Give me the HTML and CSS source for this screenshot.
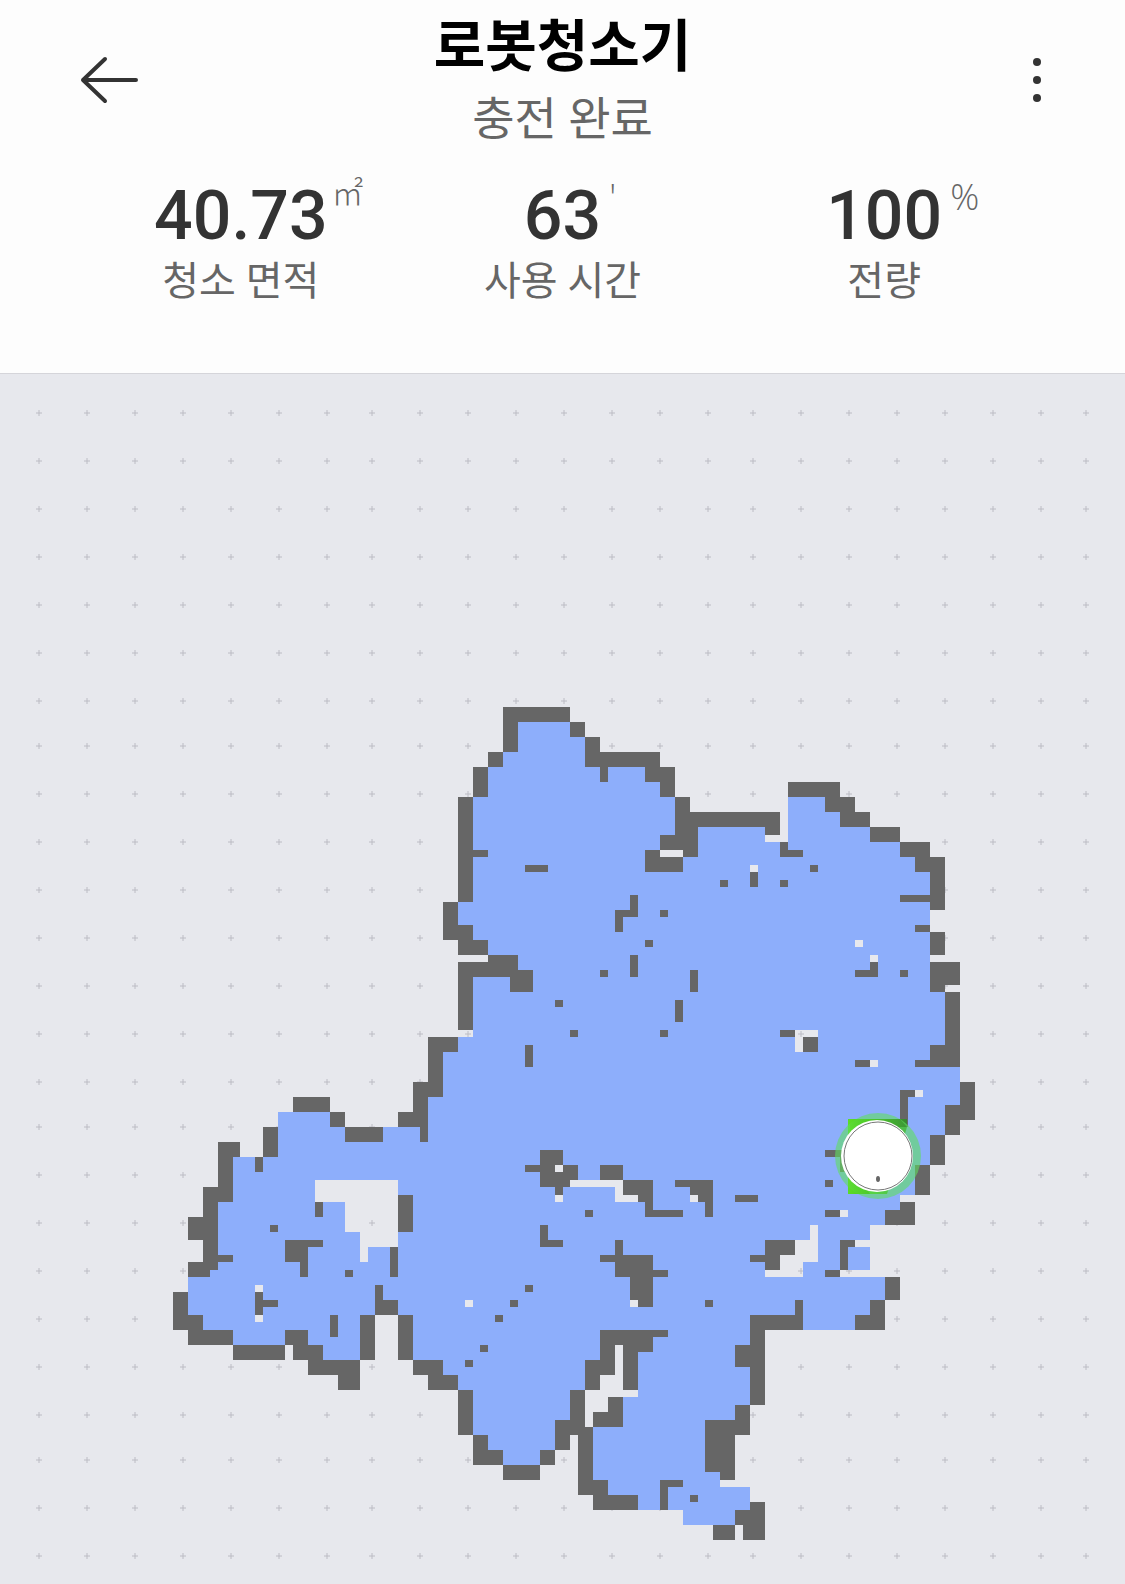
FILE: index.html
```html
<!DOCTYPE html>
<html lang="ko">
<head>
    <meta charset="UTF-8">
    <meta name="viewport" content="width=device-width, initial-scale=1.0">
    <title>로봇청소기</title>
    <link rel="stylesheet" href="styles.css">
</head>
<body>
    <header class="header">
        <div class="top-bar">
            <button class="icon-btn" type="button" aria-label="뒤로">
                <svg width="60" height="50" viewBox="0 0 60 50" fill="none" stroke="#333" stroke-width="4" stroke-linecap="round" stroke-linejoin="round">
                    <path d="M25 4L3 25L25 46M3 25H56"/>
                </svg>
            </button>
            <div class="heading">
                <h1 class="title">로봇청소기</h1>
                <p class="status">충전 완료</p>
            </div>
            <button class="icon-btn menu-btn" type="button" aria-label="메뉴">
                <svg width="10" height="50" viewBox="0 0 10 50" fill="#333">
                    <circle cx="5" cy="7" r="4"/>
                    <circle cx="5" cy="25" r="4"/>
                    <circle cx="5" cy="43" r="4"/>
                </svg>
            </button>
        </div>
        <dl class="stats">
            <div class="stat">
                <dd class="value">40.73<span class="unit unit-area">㎡</span></dd>
                <dt class="label">청소 면적</dt>
            </div>
            <div class="stat">
                <dd class="value">63<span class="unit">'</span></dd>
                <dt class="label">사용 시간</dt>
            </div>
            <div class="stat">
                <dd class="value">100<span class="unit">%</span></dd>
                <dt class="label">전량</dt>
            </div>
        </dl>
    </header>

    <main>
        <svg class="map" viewBox="0 0 1125 1210" role="img" aria-label="청소 지도">
            <defs>
                <linearGradient id="dock" x1="0" x2="1" y1="0" y2="0">
                    <stop offset="0" stop-color="#5cdc28"/>
                    <stop offset="0.4" stop-color="#48c41c"/>
                    <stop offset="1" stop-color="#35872e"/>
                </linearGradient>
            </defs>
            <path id="grid" class="grid"/>

            <!-- 1 unit = 1 map cell -->
            <g transform="translate(0 333) scale(7.5)" shape-rendering="crispEdges">
                <path class="floor" fill-rule="evenodd" d="
                    M69 2H76V4H78V8H86V10H88V12H90V15H102V18H105V12H110V14H112V16H116V18H120V20H122V22H124V38H126V48H128V53H126V57H124V61H122V65H120V67H118V69H116V71H114V72H116V75H112V76H118V79H116V81H114V83H107V81H100V93H98V95H94V102H96V104H100V107H98V109H91V107H85V105H81V103H79V96H76V95H74V99H72V101H67V99H65V97H63V91H61V89H59V87H55V81H53V80H50V81H48V87H43V85H41V83H38V85H31V83H27V81H25V76H29V66H31V60H37V54H44V56H46V57H51V56H57V52H59V46H61V44H63V36H68V33H65V31H63V29H61V26H63V12H65V8H67V6H69Z
                    M88 19h3v1h-3z M100 21h1v1h-1z M114 31h1v1h-1z M116 33h1v1h-1z M116 47h1v1h-1z M122 51h1v1h-1z
                    M106 43h3v1h-2v2h-1z M74 61h1v1h-1z M74 65h1v1h-1z M76 63h7v2h2v1h-3v-2h-6z M92 65h1v1h-1z
                    M112 67h1v1h-1z M108 69h1v5h-2v2h-5v-1h2v-2h2v-2h2z M62 79h1v1h-1z M84 79h1v1h-1z
                    M28 75h1v1h-1z M34 77h1v1h-1z M34 81h1v1h-1z
                    M42 63h11v9h-4v2h-1v-4h-2v-4h-4z
                    M82 85h1v6h2v1h-4v2h-2v2h-1v-5h2v-2h2z"/>
                <path class="wall" d="
                    M67 0h9v2h-9z M67 2h2v4h-2z M76 2h2v2h-2z M78 4h2v4h-2z M80 6h8v2h-8z M80 8h1v2h-1z M86 8h4v2h-4z M88 10h2v2h-2z
                    M65 6h2v2h-2z M63 8h2v4h-2z M61 12h2v14h-2z M63 19h2v1h-2z M59 26h2v5h-2z M61 29h2v2h-2z M61 31h4v2h-4z
                    M65 33h4v1h-4z M61 34h8v2h-8z M68 35h3v3h-3z M61 36h2v7h-2z M57 44h4v2h-4z M57 46h2v6h-2z
                    M55 50h4v2h-4z M55 52h2v2h-2z M53 54h4v2h-4z M56 56h1v2h-1z
                    M90 12h2v2h-2z M90 14h14v2h-14z M102 16h2v1h-2z M90 16h3v1h-3z M88 17h5v2h-5z M91 19h2v1h-2z M86 19h2v3h-2z M88 20h3v2h-3z
                    M104 18h1v1h2v1h-3z M105 10h7v2h-7z M110 12h4v2h-4z M112 14h4v2h-4z M116 16h4v2h-4z M120 18h4v2h-4z M122 20h4v2h-4z M124 22h2v5h-2z
                    M120 25h4v1h-4z M122 29h2v1h-2z M124 30h2v3h-2z M124 34h4v3h-4z M124 37h2v1h-2z M126 38h2v10h-2z M124 45h2v3h-2z M122 47h2v1h-2z
                    M128 50h2v5h-2z M126 53h2v4h-2z M124 57h2v4h-2z M122 61h2v4h-2z M120 66h2v1h-2z M118 67h4v2h-4z
                    M118 76h2v3h-2z M116 79h2v2h-2z M114 81h4v2h-4z M106 79h1v2h-1z M100 81h7v2h-7z M100 83h2v10h-2z M98 85h2v3h-2z
                    M98 93h2v2h-2z M94 95h6v2h-6z M94 97h4v5h-4z M96 102h2v1h-2z M100 106h2v1h-2z M98 107h4v2h-4z M99 109h3v2h-3z M95 109h3v2h-3z
                    M88 103h3v1h-2v3h-1z M92 105h1v1h-1z M79 103h2v2h-2z M79 105h6v2h-6z M77 96h2v9h-2z M76 91h2v6h-2z M74 95h2v4h-2z M81 92h2v2h-2z M79 94h4v2h-4z
                    M80 83h9v1h-2v2h-2v5h-2v-6h-1v4h-2v2h-2v-4h2z M72 99h2v2h-2z M67 101h5v2h-5z M63 97h2v2h-2z M63 99h4v2h-4z M61 91h2v6h-2z M57 89h4v2h-4z M55 87h4v2h-4z
                    M53 81h2v6h-2z M50 77h1v2h2v2h-3z M48 81h2v6h-2z M41 87h7v2h-7z M45 89h3v2h-3z M39 85h4v2h-4z M38 83h3v2h-3z M31 85h7v2h-7z M25 83h6v2h-6z M25 81h2v2h-2z M23 78h2v5h-2z
                    M25 74h4v1h-4z M25 75h3v1h-3z M27 64h2v10h-2z M25 68h2v3h-2z M29 73h2v1h-2z M29 58h3v2h-3z M29 60h2v6h-2z M35 56h2v4h-2z M34 60h1v2h-1z M39 52h5v2h-5z M44 54h2v2h-2z M46 56h5v2h-5z"/>
                <path class="wall" d="
                    M70 21h3v1h-3z M84 25h1v3h-2v2h-1v-3h2z M88 27h1v1h-1z M86 31h1v1h-1z M84 33h1v3h-1z M80 35h1v1h-1z M92 35h1v3h-1z M90 39h1v3h-1z M74 39h1v1h-1z M76 43h1v1h-1z M88 43h1v1h-1z M70 45h1v3h-1z
                    M100 22h1v2h-1z M96 23h1v1h-1z M104 23h1v1h-1z M108 21h1v1h-1z M116 34h1v2h-3v-1h2z M120 35h1v1h-1z
                    M104 43h2v1h-2z M107 44h2v2h-2z M114 47h2v1h-2z M120 51h2v1h-1v4h-1z M110 59h3v3h-1v-2h-2z M110 63h1v1h-1z M110 67h2v1h-2z
                    M72 59h3v2h-1v1h1v-1h2v2h-1v1h-1v1h-1v-1h-2v-2h-2v-1h2z M80 61h3v2h-3z M83 63h4v4h4v1h-5v-2h-1v-1h-2z M90 63h5v5h-1v-2h-1v-1h-1v-1h-2z M98 65h3v1h-3z M78 67h1v1h-1z M72 69h1v2h2v1h-3z
                    M82 71h1v2h4v2h2v1h-2v4h-2v-1h-1v-3h-2v-2h-2v-1h2z M70 77h1v1h-1z M68 79h1v1h-1z M66 81h1v1h-1z M64 85h1v1h-1z M62 87h1v1h-1z M94 79h1v1h-1z
                    M102 71h4v2h-2v2h-2v-1h-2v-1h2z M112 71h2v1h-1v3h-1z M110 75h2v1h-2z
                    M53 65h2v5h-2z M52 72h1v4h-1z M46 75h1v1h-1z M44 81h1v3h-1z M42 66h1v2h-1z M36 69h1v1h-1z M38 71h5v1h-2v4h-1v-2h-2z M34 78h1v1h2v1h-2v1h-1z"/>
            </g>

            <!-- dock and robot -->
            <path d="M848 745H907V753L887 820H848Z" fill="url(#dock)"/>
            <circle cx="878" cy="782" r="43" fill="#5fde5f" fill-opacity="0.6"/>
            <path d="M848 745H900L907 753H870L850 775V745ZM848 790L870 820H848Z" fill="url(#dock)" fill-opacity="0.7"/>
            <circle cx="877" cy="782" r="36" fill="#fff"/>
            <circle cx="878" cy="782" r="34" fill="#fff" stroke="#777" stroke-width="1"/>
            <ellipse cx="878" cy="805" rx="2" ry="3" fill="#666"/>
        </svg>
    </main>

    <script>
        function gridPositions(count) {
            const list = [];
            let pos = 39;
            for (let i = 0; i < count; i++) {
                list.push(pos);
                pos += (i % 15 === 6 || i % 15 === 14) ? 45 : 48;
            }
            return list;
        }

        let d = "";
        gridPositions(25).forEach(y => {
            gridPositions(23).forEach(x => {
                d += `M${x - 3} ${y}h6M${x} ${y - 3}v6`;
            });
        });
        document.getElementById("grid").setAttribute("d", d);
    </script>
</body>
</html>
```
FILE: styles.css
```css
* {
    box-sizing: border-box;
}
body {
    margin: 0;
    background-color: #e7e8ed;
    font-family: Roboto, "Noto Sans CJK KR", sans-serif;
    color: #333;
}
.header {
    background-color: #fdfdfd;
    border-bottom: 1px solid #d5d5da;
    padding: 13px 80px 64px;
}
.top-bar {
    display: flex;
    justify-content: space-between;
    align-items: flex-start;
    margin: 0 -44px;
}
.icon-btn {
    display: flex;
    justify-content: flex-end;
    width: 104px;
    padding: 42px 0 0;
    border: none;
    background: none;
    cursor: pointer;
}
.menu-btn {
    justify-content: center;
}
.heading {
    text-align: center;
}
.title {
    margin: 0;
    font-size: 56px;
    line-height: 68px;
    font-weight: 700;
    color: #000;
}
.status {
    margin: 0;
    font-size: 46px;
    line-height: 76px;
    color: #666;
}
.stats {
    display: grid;
    grid-template-columns: repeat(3, 1fr);
    margin: 20px 0 0;
}
.stat {
    display: flex;
    flex-direction: column;
    align-items: center;
}
.value {
    position: relative;
    margin: 0;
    font-size: 68px;
    line-height: 78px;
    font-weight: 500;
}
.unit {
    position: absolute;
    left: 100%;
    top: 0;
    margin-left: 8px;
    font-family: "Open Sans", "Noto Sans CJK KR", sans-serif;
    font-size: 36px;
    line-height: 40px;
    font-weight: 300;
    color: #666;
}
.unit-area {
    margin-left: 4px;
    font-size: 32px;
    line-height: 32px;
}
.label {
    font-size: 40px;
    line-height: 54px;
    color: #666;
}
.map {
    display: block;
    width: 100%;
    height: auto;
}
.grid {
    fill: none;
    stroke: #bcbcc4;
    stroke-width: 1;
}
.floor {
    fill: #8daefb;
}
.wall {
    fill: #666;
}
```
